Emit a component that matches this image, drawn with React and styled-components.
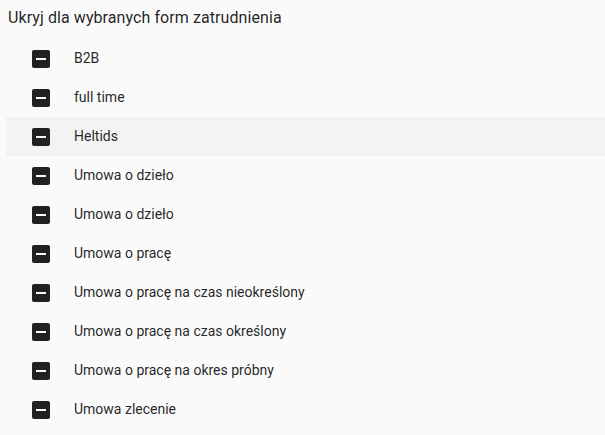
import React from "react";
import styled, { createGlobalStyle } from "styled-components";

const Global = createGlobalStyle`
  html, body { margin: 0; padding: 0; background: #fafafa; }
  body { font-family: Roboto, "Noto Sans", Arial, sans-serif; color: rgba(0,0,0,0.87); }
`;

const Page = styled.div`
  width: 605px;
  height: 435px;
  overflow: hidden;
  background: #fafafa;
`;

const Title = styled.div`
  padding: 8px 8px 0 8px;
  height: 28px;
  font-size: 16px;
  line-height: 20px;
  letter-spacing: 0.08px;
  color: rgba(0,0,0,0.87);
`;

const List = styled.ul`
  list-style: none;
  margin: 3px 0 0 6px;
  padding: 0;
`;

const Row = styled.li`
  display: flex;
  align-items: center;
  height: 39px;
  padding-left: 23px;
  background: ${(p) => (p.$hover ? "#f3f3f3" : "transparent")};
`;

const Box = styled.svg`
  width: 24px;
  height: 24px;
  flex: none;
  fill: #212121;
`;

const Label = styled.span`
  margin-left: 21px;
  padding-bottom: 2px;
  font-size: 14px;
  line-height: 20px;
  color: rgba(0,0,0,0.87);
`;

const items = [
  "B2B",
  "full time",
  "Heltids",
  "Umowa o dzieło",
  "Umowa o dzieło",
  "Umowa o pracę",
  "Umowa o pracę na czas nieokreślony",
  "Umowa o pracę na czas określony",
  "Umowa o pracę na okres próbny",
  "Umowa zlecenie",
];

export default function App() {
  return (
    <Page>
      <Global />
      <Title>Ukryj dla wybranych form zatrudnienia</Title>
      <List>
        {items.map((t, i) => (
          <Row key={i} $hover={i === 2}>
            <Box viewBox="0 0 24 24">
              <path d="M19 3H5c-1.1 0-2 .9-2 2v14c0 1.1.9 2 2 2h14c1.1 0 2-.9 2-2V5c0-1.1-.9-2-2-2zm-2 10H7v-2h10v2z" />
            </Box>
            <Label>{t}</Label>
          </Row>
        ))}
      </List>
    </Page>
  );
}
